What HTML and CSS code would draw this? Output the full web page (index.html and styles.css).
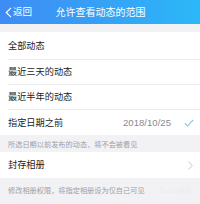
FILE: index.html
```html
<!DOCTYPE html>
<html>
<head>
<meta charset="utf-8">
<link rel="stylesheet" href="styles.css">
</head>
<body>
<div class="page">
  <header class="bar">
    <div class="back">
      <svg class="back-icon" width="7" height="11" viewBox="0 0 7 11"><path d="M6 0.8 L1.3 5.5 L6 10.2" fill="none" stroke="#fff" stroke-width="1.2"/></svg>
      <span>返回</span>
    </div>
    <div class="title">允许查看动态的范围</div>
  </header>
  <div class="gap"></div>
  <div class="group">
    <div class="row first"><span class="label">全部动态</span></div>
    <div class="row"><span class="label">最近三天的动态</span></div>
    <div class="row"><span class="label">最近半年的动态</span></div>
    <div class="row last">
      <span class="label">指定日期之前</span>
      <span class="date">2018/10/25</span>
      <svg class="check" width="10" height="8" viewBox="0 0 10 8"><path d="M0.8 4.2 L3.6 7 L9.2 0.8" fill="none" stroke="#7ec3ee" stroke-width="1.1"/></svg>
    </div>
  </div>
  <div class="note">所选日期以前发布的动态，将不会被看见</div>
  <div class="group">
    <div class="row single">
      <span class="label">封存相册</span>
      <svg class="chev" width="5" height="9" viewBox="0 0 5 9"><path d="M0.6 0.6 L4.2 4.5 L0.6 8.4" fill="none" stroke="#c4c4c8" stroke-width="1"/></svg>
    </div>
  </div>
  <div class="note bottom">
    <span>修改相册权限，将指定相册设为仅自己可见</span>
    <span class="mark">Baidu经验</span>
  </div>
</div>
</body>
</html>
```
FILE: styles.css
```css
* { box-sizing: border-box; margin: 0; padding: 0; }
html, body { width: 200px; height: 204px; overflow: hidden; }
body {
  background: #f2f2f5;
  font-family: "Noto Sans CJK SC", "Noto Sans", sans-serif;
  color: #222;
}
.page { width: 200px; height: 204px; }
.bar {
  height: 24px;
  background: linear-gradient(90deg, #3e8cf4 0%, #35a3f6 55%, #2bb8f8 100%);
  display: flex;
  align-items: center;
  position: relative;
  color: #fff;
}
.back {
  display: flex;
  align-items: center;
  padding-left: 5px;
  font-size: 9.5px;
  gap: 1px;
  height: 24px;
}
.back span { line-height: 1; }
.title {
  position: absolute;
  left: 0; right: 0; top: 0;
  height: 24px;
  line-height: 23px;
  text-align: center;
  font-size: 10px;
  padding-left: 1px;
}
.gap { height: 8px; }
.group { background: #fff; padding-left: 8px; }
.row {
  height: 25px;
  display: flex;
  align-items: center;
  border-bottom: 1px solid #ebebee;
  padding-right: 6px;
}
.row.first { height: 28px; }
.row.last, .row.single { border-bottom: none; }
.row.last { height: 25px; }
.row.single { height: 26px; }
.label { font-size: 9.2px; flex: 1; line-height: 1; }
.date { font-size: 9.6px; color: #8a8a8e; margin-right: 13px; font-family: "Liberation Sans", "Noto Sans", sans-serif; }
.check { margin-right: 0px; }
.chev { margin-right: 1px; }
.note {
  height: 17px;
  padding-left: 8px;
  font-size: 7.2px;
  color: #a0a0a5;
  display: flex;
  align-items: center;
}
.note.bottom { height: 26px; padding-bottom: 3px; justify-content: space-between; padding-right: 8px; }
.mark { font-size: 7px; color: #ececef; }
```
